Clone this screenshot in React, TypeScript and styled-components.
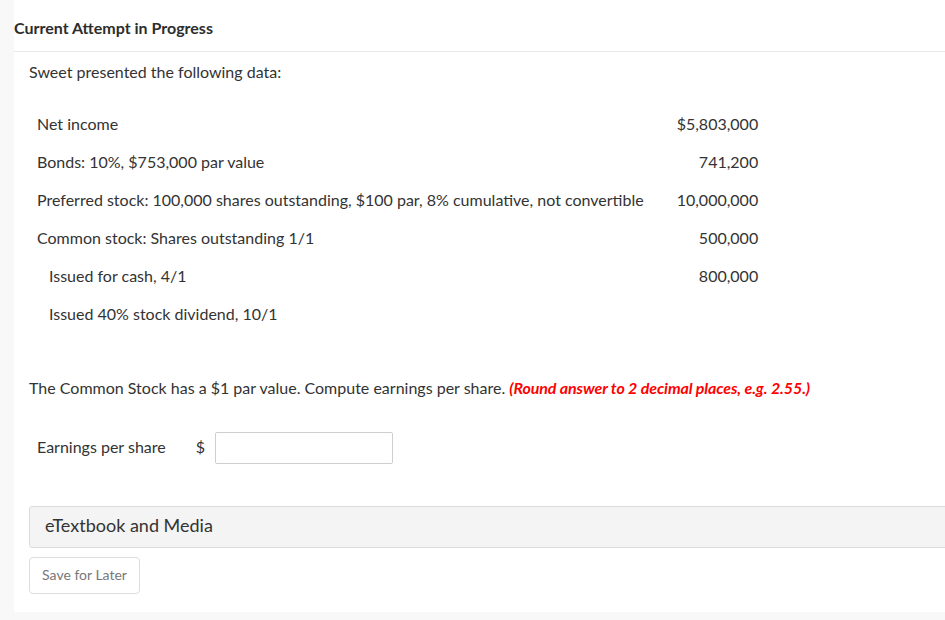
import React from "react";
import styled, { createGlobalStyle } from "styled-components";

const GlobalStyle = createGlobalStyle`
  html, body {
    margin: 0;
    padding: 0;
    background: #f8f8f8;
    overflow: hidden;
  }
  body {
    font-family: Lato, "Open Sans", "Liberation Sans", sans-serif;
    color: #333;
  }
`;

const Page = styled.div`
  padding-left: 14px;
`;

const Panel = styled.div`
  background: #fff;
  width: 960px;
  padding-bottom: 18px;
`;

const Header = styled.div`
  height: 52px;
  border-bottom: 1px solid #e9e9e9;
  display: flex;
  align-items: center;
  padding-top: 4px;
  box-sizing: border-box;
`;

const Title = styled.h2`
  margin: 0;
  font-size: 16px;
  font-weight: 700;
  color: #2d2d2d;
`;

const Body = styled.div`
  padding-left: 15px;
`;

const Text = styled.p`
  margin: 10px 0 0;
  font-size: 16px;
  line-height: 20px;
`;

const Question = styled(Text)`
  margin-top: 46px;
`;

const Hint = styled.strong`
  color: #f00;
  font-style: italic;
  font-weight: 700;
  letter-spacing: -0.1px;
`;

const Table = styled.table`
  margin-top: 22px;
  border-collapse: collapse;
  font-size: 16px;
`;

const Cell = styled.td<{ $indent?: boolean; $num?: boolean }>`
  height: 38px;
  padding: 0 8px;
  padding-left: ${(p) => (p.$num ? "25px" : p.$indent ? "20px" : "8px")};
  text-align: ${(p) => (p.$num ? "right" : "left")};
  white-space: nowrap;
`;

const AnswerRow = styled.div`
  margin-top: 34px;
  display: flex;
  align-items: center;
  padding-left: 8px;
  font-size: 16px;
`;

const Label = styled.span`
  padding-bottom: 3px;
`;

const Dollar = styled(Label)`
  margin-left: 30px;
  margin-right: 10px;
`;

const Input = styled.input`
  width: 178px;
  height: 32px;
  box-sizing: border-box;
  border: 1px solid #cfcfcf;
  border-radius: 2px;
  font-size: 16px;
  padding: 0 6px;
`;

const Media = styled.div`
  margin-top: 42px;
  height: 42px;
  box-sizing: border-box;
  background: #f4f4f4;
  border: 1px solid #dcdcdc;
  border-radius: 3px 0 0 3px;
  display: flex;
  align-items: center;
  padding: 0 0 5px 15px;
  font-size: 18px;
  color: #333;
`;

const SaveButton = styled.button`
  margin-top: 9px;
  width: 111px;
  height: 37px;
  padding: 0 0 3px;
  background: #fff;
  border: 1px solid #dddddd;
  border-radius: 4px;
  color: #777;
  font-family: inherit;
  font-size: 14px;
`;

const rows: { label: string; value?: string; indent?: boolean }[] = [
  { label: "Net income", value: "$5,803,000" },
  { label: "Bonds: 10%, $753,000 par value", value: "741,200" },
  {
    label:
      "Preferred stock: 100,000 shares outstanding, $100 par, 8% cumulative, not convertible",
    value: "10,000,000",
  },
  { label: "Common stock: Shares outstanding 1/1", value: "500,000" },
  { label: "Issued for cash, 4/1", value: "800,000", indent: true },
  { label: "Issued 40% stock dividend, 10/1", indent: true },
];

const App = () => {
  return (
    <React.Fragment>
      <GlobalStyle />
      <Page>
        <Panel>
          <Header>
            <Title>Current Attempt in Progress</Title>
          </Header>
          <Body>
            <Text>Sweet presented the following data:</Text>
            <Table>
              <tbody>
                {rows.map((r) => (
                  <tr key={r.label}>
                    <Cell $indent={r.indent}>{r.label}</Cell>
                    <Cell $num>{r.value ?? ""}</Cell>
                  </tr>
                ))}
              </tbody>
            </Table>
            <Question>
              The Common Stock has a $1 par value. Compute earnings per share.{" "}
              <Hint>(Round answer to 2 decimal places, e.g. 2.55.)</Hint>
            </Question>
            <AnswerRow>
              <Label>Earnings per share</Label>
              <Dollar>$</Dollar>
              <Input type="text" />
            </AnswerRow>
            <Media>eTextbook and Media</Media>
            <SaveButton>Save for Later</SaveButton>
          </Body>
        </Panel>
      </Page>
    </React.Fragment>
  );
};

export default App;
